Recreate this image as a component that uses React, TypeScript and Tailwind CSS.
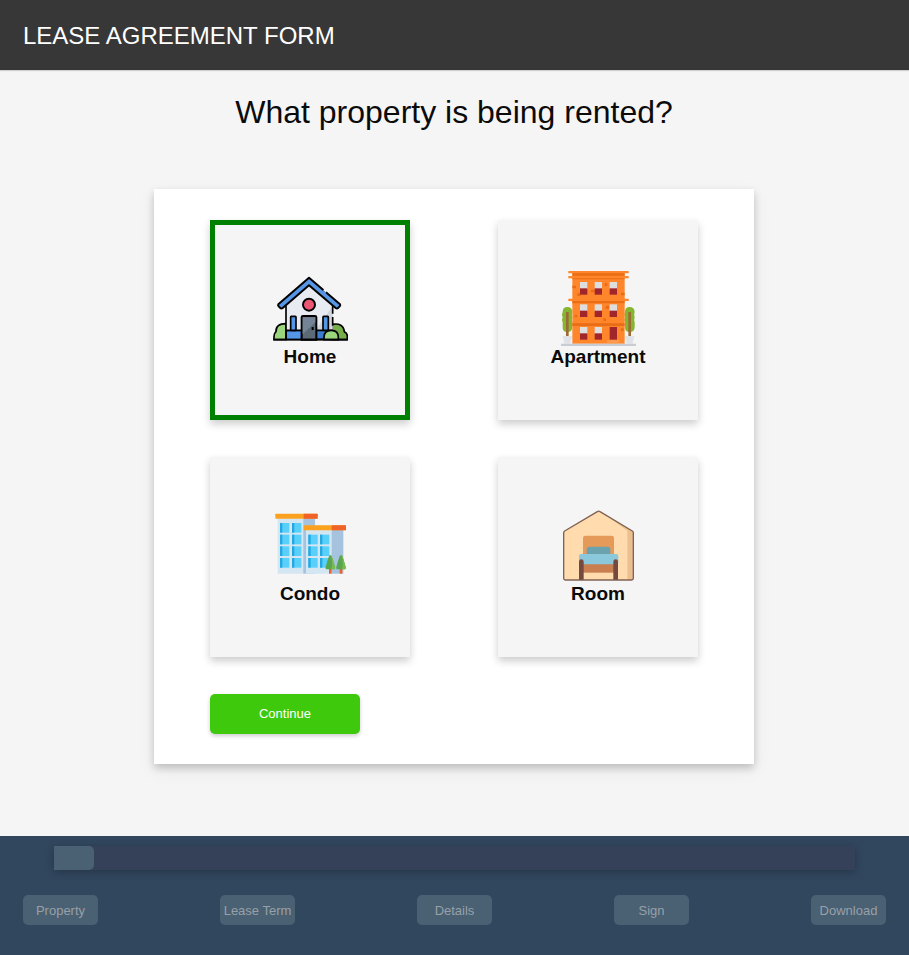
import { useState } from "react";
import type { ReactNode } from "react";

function HomeIcon() {
  return (
    <svg viewBox="39 18 225 225" className="size-[75px]" aria-hidden="true">
      <path d="M42 224v-10q0-9 6-14-1-24 30-24v48z" fill="#9bd67c" stroke="#000" strokeWidth="5" strokeLinejoin="round" />
      <path d="M216 178q34-6 37 22 9 4 9 14v10h-46z" fill="#78ad4c" stroke="#000" strokeWidth="5" strokeLinejoin="round" />
      <path d="M78 224V120l69-60 71 60v104z" fill="#e8ebf2" />
      <path d="M218 122v60l-32 42h-39z" fill="#d3d6df" />
      <path d="M78 122v102M218 122v24M218 156v26" stroke="#000" strokeWidth="5" fill="none" />
      <path d="M147 38 55 118q-2 3 1 6l5 5q3 3 7 0l79-68 80 68q4 3 7 0l5-5q3-3 1-6z" fill="#5596e6" stroke="#000" strokeWidth="6" strokeLinejoin="round" />
      <path d="m192 73 7 7" stroke="#f5f5f5" strokeWidth="7" />
      <path d="m190 79 7 6" stroke="#5596e6" strokeWidth="5" />
      <circle cx="147" cy="119" r="18" fill="#ed5574" stroke="#000" strokeWidth="6" />
      <path d="M79 196h137v27H79z" fill="#3d7bd0" stroke="#000" strokeWidth="5" />
      <path d="M81 201h40v20H81z" fill="#5596e6" />
      <rect x="92" y="154" width="16" height="42" rx="2" fill="#5596e6" stroke="#000" strokeWidth="5" />
      <rect x="189" y="154" width="16" height="42" rx="2" fill="#5596e6" stroke="#000" strokeWidth="5" />
      <path d="M125 224v-67q0-4 4-4h36q4 0 4 4v67z" fill="#5c6977" stroke="#000" strokeWidth="6" />
      <path d="M128 222v-14l38-36v-15h-38z" fill="#748395" />
      <path d="M158 186v9" stroke="#000" strokeWidth="6" />
      <path d="M192 224v-7q0-21 22-21 21 0 21 21v7z" fill="#9bd67c" stroke="#000" strokeWidth="5" />
      <path d="M42 224h219" stroke="#000" strokeWidth="5" strokeLinecap="round" />
    </svg>
  );
}

function ApartmentIcon() {
  return (
    <svg viewBox="48 27 225 225" className="size-[75px]" aria-hidden="true">
      {[0, 187].map((dx) => (
        <g key={dx} transform={`translate(${dx})`}>
          <path d="M53 150q0-15 14-15t15 15q-3 9 0 16-3 8 0 15v14q0 15-15 15t-14-15v-14q-4-7 0-15-4-8 0-16z" fill="#84b62f" />
          <path d="M63 150h8v74h-8z" fill="#9c6b35" />
          <path d="M53 222h28l-5 23H58z" fill="#dfe3e8" />
        </g>
      ))}
      <path d="M82 30h157v215H82z" fill="#ff862b" />
      <path d="M70 27h181v7H70zM70 42h181v7H70zM70 110h181v7H70z" fill="#ff862b" />
      <path d="M82 34h157v7H82zM82 49h157v3H82zM82 117h157v7H82zM82 184h157v8H82z" fill="#e96c16" />
      <path d="M82 71h11v8H82zM97 94h10v8H97zM179 64h8v8h-8zM138 83h10v8h-10zM228 92h11v8h-11zM89 158h8v8h-8zM182 131h10v9h-10zM175 169h8v8h-8zM228 199h8v8h-8z" fill="#e96c16" />
      {[[60, 79], [127, 146], [195, 214]].map(([top, sill], row) =>
        [105, 149, 194].map((x, col) =>
          row === 2 && col === 2 ? null : (
            <g key={`${row}-${col}`}>
              <rect x={x} y={top} width="22" height="22" fill="#dedede" />
              <rect x={x} y={sill} width="22" height="19" fill="#a0262c" />
            </g>
          ),
        ),
      )}
      <path d="M194 195h22v38h-22z" fill="#a0262c" />
      <path d="M186 234h37v10h-37z" fill="#ff9a4c" />
      <path d="M48 245h225v7H48z" fill="#c9ccd2" />
    </svg>
  );
}

function CondoIcon() {
  return (
    <svg viewBox="39 24 225 225" className="size-[75px]" aria-hidden="true">
      <path d="M53 55h80v166H53z" fill="#d5e6f3" />
      <path d="M130 55h35v166h-35z" fill="#a5c2df" />
      <path d="M138 90h78v131h-78z" fill="#d5e6f3" />
      <path d="M215 90h35v131h-35z" fill="#a5c2df" />
      <rect x="46" y="41" width="127" height="15" rx="2" fill="#faa21f" />
      <path d="M131 41h40q2 0 2 2v11q0 2-2 2h-40z" fill="#ef6328" />
      <rect x="131" y="76" width="127" height="15" rx="2" fill="#faa21f" />
      <path d="M215 76h41q2 0 2 2v11q0 2-2 2h-41z" fill="#ef6328" />
      {[69, 104, 139, 174].map((y) =>
        [60, 96, 145, 180].map((x) =>
          y === 69 && x > 100 ? null : (
            <g key={`${x}-${y}`}>
              <rect x={x} y={y} width="28" height="29" fill="#58d0fa" />
              <rect x={x} y={y} width="7" height="29" fill="#25a7e3" />
            </g>
          ),
        ),
      )}
      {[211, 243].map((x) => (
        <g key={x} transform={`translate(${x})`}>
          <path d="M-4 204h8v17h-8z" fill="#ef6328" />
          <path d="M0 165q4 0 6 9 4 12 8 27 2 7-5 7H-9q-7 0-5-7 4-15 8-27 2-9 6-9z" fill="#5aa550" />
          <path d="M0 165q4 0 6 9 4 12 8 27 2 7-5 7H3Q9 187 0 165z" fill="#78bb4f" />
        </g>
      ))}
    </svg>
  );
}

function RoomIcon() {
  return (
    <svg viewBox="39 24 225 225" className="size-[75px]" aria-hidden="true">
      <path d="M47 98q0-3 3-5l98-58q4-3 8 0l97 58q3 2 3 5v137q0 5-5 5H52q-5 0-5-5z" fill="#ffdbad" />
      <path d="m170 43 83 50q3 2 3 5v137q0 5-5 5h-13V92z" fill="#ecc08e" />
      <path d="M47 98q0-3 3-5l98-58q4-3 8 0l97 58q3 2 3 5v137q0 5-5 5H52q-5 0-5-5z" fill="none" stroke="#806153" strokeWidth="4" />
      <rect x="105" y="107" width="93" height="70" rx="7" fill="#e69a5a" />
      <path d="M104 190h94v28h-94z" fill="#c97f4f" />
      <path d="M116 165v-17q0-8 8-8h55q8 0 8 8v17z" fill="#6aa3ae" />
      <path d="M93 169q0-7 7-7h104q7 0 7 7v18q0 6-7 6H100q-7 0-7-6z" fill="#8bc8dc" />
      <path d="M93 239v-54q0-7 7-7t7 7v54zM196 239v-54q0-7 7-7t7 7v54z" fill="#74493f" />
    </svg>
  );
}

const properties: { name: string; icon: ReactNode }[] = [
  { name: "Home", icon: <HomeIcon /> },
  { name: "Apartment", icon: <ApartmentIcon /> },
  { name: "Condo", icon: <CondoIcon /> },
  { name: "Room", icon: <RoomIcon /> },
];

const steps = ["Property", "Lease Term", "Details", "Sign", "Download"];

export default function App() {
  const [selected, setSelected] = useState("Home");

  return (
    <div className="flex min-h-screen flex-col bg-[#f5f5f5] font-['Liberation_Sans',Arial,sans-serif] text-[#0b0b0b]">
      <header className="flex h-[70px] items-center bg-[#373737] px-[23px] pt-0.5 shadow-[0_1px_1px_rgba(0,0,0,0.15)]">
        <p className="text-2xl text-white">LEASE AGREEMENT FORM</p>
      </header>

      <main className="flex grow flex-col items-center pt-6 pr-[17px] pb-[72px] pl-4">
        <h1 className="text-center text-[32px] leading-9">What property is being rented?</h1>

        <form
          className="mt-[59px] w-full max-w-[600px] bg-white px-14 pt-[31px] pb-[30px] shadow-[0_4px_8px_rgba(0,0,0,0.2),0_6px_20px_rgba(0,0,0,0.05)]"
          onSubmit={(event) => event.preventDefault()}
        >
          <div role="radiogroup" aria-label="Property type" className="flex flex-wrap justify-between gap-y-[37px]">
            {properties.map(({ name, icon }) => (
              <label
                key={name}
                className="flex size-[200px] cursor-pointer flex-col items-center justify-center border-[5px] border-transparent bg-[#f5f5f5] pb-0.5 shadow-[0_4px_8px_rgba(0,0,0,0.2)] has-checked:border-[#008000]"
              >
                <input
                  type="radio"
                  name="property"
                  value={name}
                  checked={selected === name}
                  onChange={() => setSelected(name)}
                  className="sr-only"
                />
                {icon}
                <span className="text-[19px] leading-[22px] font-bold">{name}</span>
              </label>
            ))}
          </div>
          <button
            type="submit"
            className="mt-[37px] block h-10 w-[150px] rounded-[5px] bg-[#3fc90d] text-[13px] text-white shadow-[0_2px_4px_rgba(0,0,0,0.2)]"
          >
            Continue
          </button>
        </form>
      </main>

      <footer className="bg-[#31475e] px-[23px] pt-[10px] pb-[30px]">
        <div
          role="progressbar"
          aria-label="Form progress"
          aria-valuenow={5}
          aria-valuemin={0}
          aria-valuemax={100}
          className="mx-[31px] h-6 bg-[#344158] shadow-[0_2px_8px_rgba(0,0,0,0.25)]"
        >
          <div className="h-full w-1/20 rounded-r-[5px] bg-[#4a6073]" />
        </div>
        <nav aria-label="Form steps" className="mt-[25px] flex justify-between">
          {steps.map((step) => (
            <button
              key={step}
              type="button"
              className="h-[30px] w-[75px] rounded-[5px] bg-[#4a6073] pt-0.5 text-[13px] whitespace-nowrap text-[#98a0a7]"
            >
              {step}
            </button>
          ))}
        </nav>
      </footer>
    </div>
  );
}
